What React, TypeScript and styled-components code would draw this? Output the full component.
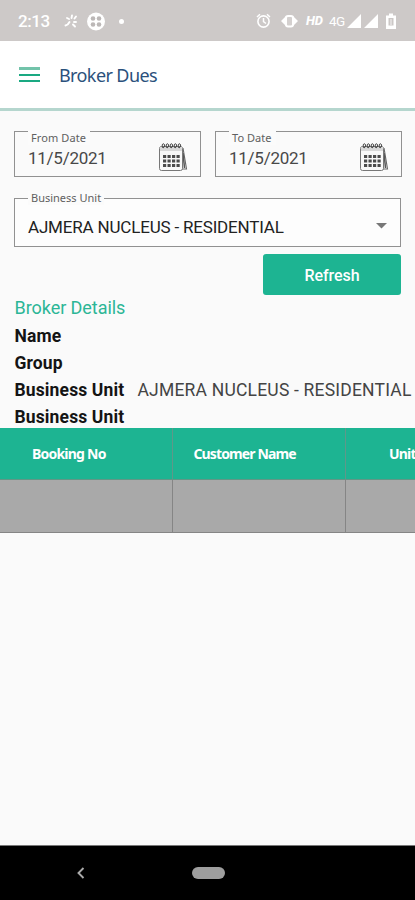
import React from "react";
import styled, { createGlobalStyle } from "styled-components";

const GlobalStyle = createGlobalStyle`
  * { box-sizing: border-box; }
  body { margin: 0; background: #fafafa; font-family: Roboto, sans-serif; overflow: hidden; }
`;

const Screen = styled.div`
  width: 415px;
  height: 900px;
  display: flex;
  flex-direction: column;
  background: #fafafa;
  overflow: hidden;
`;

const StatusBar = styled.div`
  height: 41px;
  flex: none;
  display: flex;
  align-items: center;
  background: #cdc9c8;
  color: #fff;
  padding: 0 17px 0 18px;
`;

const Clock = styled.span`
  width: 46px;
  font-size: 17px;
  line-height: 20px;
  font-weight: 500;
  letter-spacing: -0.4px;
  padding-top: 1px;
`;

const StatusIcons = styled.svg`
  display: block;
  flex: none;
`;

const StatusGroup = styled.div`
  margin-left: auto;
  display: flex;
  align-items: center;
`;

const StatusText = styled.span<{ $bold?: boolean; $width: number }>`
  width: ${(p) => p.$width}px;
  font-size: ${(p) => (p.$bold ? 13 : 13.5)}px;
  line-height: 16px;
  font-weight: ${(p) => (p.$bold ? 800 : 400)};
  font-style: ${(p) => (p.$bold ? "italic" : "normal")};
  letter-spacing: ${(p) => (p.$bold ? -0.2 : -0.7)}px;
  white-space: nowrap;
`;

const Header = styled.header`
  height: 70px;
  flex: none;
  display: flex;
  align-items: center;
  gap: 19px;
  padding: 0 0 0 19px;
  background: #fff;
  border-bottom: 3px solid #b5d6ce;
`;

const Burger = styled.div`
  width: 21px;
  height: 15px;
  display: flex;
  flex-direction: column;
  justify-content: space-between;
`;

const BurgerLine = styled.span<{ $soft?: boolean }>`
  height: ${(p) => (p.$soft ? 3 : 2)}px;
  background: ${(p) => (p.$soft ? "#72c3aa" : "#1aa982")};
`;

const Title = styled.h1`
  margin: 0;
  font: 400 18px/24px "Noto Sans", sans-serif;
  letter-spacing: -0.6px;
  color: #2b517c;
`;

const Form = styled.section`
  display: flex;
  flex-direction: column;
  padding: 20px 14px 0;
`;

const DateRow = styled.div`
  display: grid;
  grid-template-columns: 187px 187px;
  gap: 14px;
`;

const Field = styled.div<{ $height: number; $white?: boolean }>`
  position: relative;
  height: ${(p) => p.$height}px;
  display: flex;
  justify-content: space-between;
  border: 1px solid #919191;
  background: ${(p) => (p.$white ? "#fdfdfd" : "transparent")};
`;

const FieldLabel = styled.label<{ $width: number; $top: number; $spacing: number }>`
  position: absolute;
  left: 13px;
  top: ${(p) => p.$top}px;
  width: ${(p) => p.$width}px;
  padding-left: 3px;
  font: 400 11px/14px "Noto Sans", sans-serif;
  letter-spacing: ${(p) => p.$spacing}px;
  white-space: nowrap;
  color: #606060;
  background: #fbfbfb;
`;

const FieldValue = styled.span<{ $top: number; $spacing: number; $dark?: boolean }>`
  padding: ${(p) => p.$top}px 0 0 13px;
  font-size: 17px;
  line-height: 20px;
  letter-spacing: ${(p) => p.$spacing}px;
  white-space: nowrap;
  color: ${(p) => (p.$dark ? "#222" : "#484848")};
`;

const CalendarSvg = styled.svg`
  margin: 10px 12px 0 0;
  flex: none;
`;

const UnitSlot = styled.div`
  margin-top: 21px;
`;

const Caret = styled.svg`
  margin: 24px 13px 0 0;
  flex: none;
`;

const RefreshButton = styled.button`
  align-self: flex-end;
  width: 138px;
  height: 41px;
  margin-top: 7px;
  padding: 2px 0 0;
  border: 0;
  border-radius: 3px;
  background: #1db492;
  color: #fff;
  font: 500 16px/20px Roboto, sans-serif;
  letter-spacing: -0.05px;
`;

const Details = styled.section`
  height: 133px;
  flex: none;
  padding-left: 14.5px;
`;

const DetailsTitle = styled.h2`
  margin: 0 0 3px;
  font-size: 18px;
  line-height: 25px;
  font-weight: 400;
  letter-spacing: -0.05px;
  color: #2cb696;
`;

const DetailRow = styled.div`
  height: 27px;
  display: grid;
  grid-template-columns: 123px max-content;
  line-height: 27px;
  white-space: nowrap;
`;

const DetailName = styled.span`
  font-size: 17.5px;
  font-weight: 700;
  letter-spacing: 0.13px;
  color: #141414;
`;

const DetailValue = styled.span`
  font-size: 17.5px;
  font-weight: 400;
  letter-spacing: 0.2px;
  color: #444;
`;

const Table = styled.div`
  display: grid;
  grid-template-columns: 173px 173px 173px;
  grid-template-rows: 52px 53px;
  flex: none;
  width: 519px;
`;

const HeadCell = styled.div<{ $indent: number; $spacing: number }>`
  padding: 0 0 0 ${(p) => p.$indent}px;
  display: flex;
  align-items: center;
  border-right: 1px solid #5f9889;
  border-bottom: 1px solid #629686;
  background: #1db492;
  color: #fff;
  font: 700 14px/20px "Noto Sans", sans-serif;
  letter-spacing: ${(p) => p.$spacing}px;
  white-space: nowrap;
`;

const BodyCell = styled.div`
  border-right: 1px solid #858585;
  border-bottom: 1px solid #858585;
  background: #a9a9a9;
`;

const NavBar = styled.nav`
  height: 55px;
  flex: none;
  margin-top: auto;
  display: flex;
  align-items: center;
  padding: 0 0 1px 76px;
  background: #000;
  border-top: 1px solid #777;
`;

const HomePill = styled.span`
  width: 33px;
  height: 12px;
  margin-left: 106px;
  border-radius: 6px;
  background: #9e9e9e;
`;

function Calendar() {
  return (
    <CalendarSvg width="30" height="31" viewBox="0 0 30 31" fill="none">
      <path d="M25 6L28.5 27H24" stroke="#666" strokeWidth="1.1" />
      <path d="M25 11L26.5 26" stroke="#555" strokeWidth="1.5" />
      <rect x="1.5" y="4.5" width="23" height="24" rx="2" fill="#f8f8f8" stroke="#777" />
      <path d="M2 5H24V9H2Z" fill="#d8d8d8" />
      {[5, 9, 13, 17, 21].map((x) => (
        <path key={x} d={`M${x} 6C${x - 2} 3 ${x} 1 ${x + 1} 2S${x + 2} 5 ${x} 6`} stroke="#444" />
      ))}
      {[13, 17.5, 22].map((y) =>
        [5, 9.5, 14, 18.5].map((x) => (
          <rect key={`${x}-${y}`} x={x} y={y} width="3.2" height="3" fill="#4b4b4b" />
        ))
      )}
    </CalendarSvg>
  );
}

function DateField({ label, notch, spacing }: { label: string; notch: number; spacing: number }) {
  return (
    <Field $height={46}>
      <FieldLabel $width={notch} $top={-1} $spacing={spacing}>{label}</FieldLabel>
      <FieldValue $top={16} $spacing={-0.25}>11/5/2021</FieldValue>
      <Calendar />
    </Field>
  );
}

const rows = [
  { name: "Name", value: "" },
  { name: "Group", value: "" },
  { name: "Business Unit", value: "AJMERA NUCLEUS - RESIDENTIAL" },
  { name: "Business Unit", value: "" },
];

const columns = [
  { text: "Booking No", indent: 32, spacing: -0.78 },
  { text: "Customer Name", indent: 20.5, spacing: -0.87 },
  { text: "Unit", indent: 43, spacing: -0.8 },
];

export default function App() {
  return (
    <>
      <GlobalStyle />
      <Screen>
        <StatusBar>
          <Clock>2:13</Clock>
          <StatusIcons width="64" height="20" viewBox="0 0 64 20" fill="none">
            <g stroke="#fff" strokeWidth="1.9" strokeLinecap="round">
              <path d="M3 7L5 8M1.5 14.5Q4 14 5.5 11M8 4.5L7.5 7M12 5.5L10.5 7.5M10 11H12M9 13.5L11 15.5" />
            </g>
            <circle cx="32" cy="10.5" r="9" fill="#fff" />
            <g fill="#bcb8b7">
              <circle cx="29" cy="7.5" r="2.3" /><circle cx="35" cy="7.5" r="2.3" />
              <circle cx="29" cy="13.5" r="2.3" /><circle cx="35" cy="13.5" r="2.3" />
            </g>
            <circle cx="57.5" cy="10.5" r="2.5" fill="#fff" />
          </StatusIcons>
          <StatusGroup>
            <StatusIcons width="50" height="18" viewBox="0 0 50 18" fill="none">
              <circle cx="7.5" cy="9.5" r="5.6" stroke="#fff" strokeWidth="1.6" />
              <path d="M7.5 6V9.7L10 11.5M1 5L4 2.3M11 2.3L14 5" stroke="#fff" strokeWidth="1.5" />
              <path d="M25 9L30 4V14ZM42 9L37 4V14Z" fill="#fff" />
              <rect x="30" y="4" width="7" height="10.5" rx="2" fill="#d4d0cf" stroke="#fff" strokeWidth="2" />
            </StatusIcons>
            <StatusText $bold $width={23}>HD</StatusText>
            <StatusText $width={18}>4G</StatusText>
            <StatusIcons width="51" height="18" viewBox="0 0 51 18" fill="none">
              <path d="M0 16L14 2V16ZM17 16L31 2V16Z" fill="#fff" />
              <path d="M42 1.5H46V3.5H49V17H39V3.5H42Z" fill="#fff" />
              <rect x="41.5" y="6" width="5" height="7.5" fill="#cbc7c6" />
              <path d="M43 8H45M43 10H45M43 12H45" stroke="#f5f3f3" />
            </StatusIcons>
          </StatusGroup>
        </StatusBar>
        <Header>
          <Burger><BurgerLine $soft /><BurgerLine /><BurgerLine /></Burger>
          <Title>Broker Dues</Title>
        </Header>
        <Form>
          <DateRow>
            <DateField label="From Date" notch={62} spacing={0.1} />
            <DateField label="To Date" notch={47} spacing={0.05} />
          </DateRow>
          <UnitSlot>
            <Field $height={49} $white>
              <FieldLabel $width={76} $top={-8} $spacing={0}>Business Unit</FieldLabel>
              <FieldValue $top={18} $spacing={-0.18} $dark>AJMERA NUCLEUS - RESIDENTIAL</FieldValue>
              <Caret width="11" height="6"><path d="M0 0H11L5.5 5.5Z" fill="#777" /></Caret>
            </Field>
          </UnitSlot>
          <RefreshButton>Refresh</RefreshButton>
        </Form>
        <Details>
          <DetailsTitle>Broker Details</DetailsTitle>
          {rows.map((row, i) => (
            <DetailRow key={i}>
              <DetailName>{row.name}</DetailName>
              <DetailValue>{row.value}</DetailValue>
            </DetailRow>
          ))}
        </Details>
        <Table>
          {columns.map((c) => (
            <HeadCell key={c.text} $indent={c.indent} $spacing={c.spacing}>{c.text}</HeadCell>
          ))}
          {columns.map((c) => <BodyCell key={c.text} />)}
        </Table>
        <NavBar>
          <svg width="10" height="14" viewBox="0 0 10 14" fill="none">
            <path d="M7.5 2L2.5 7L7.5 12" stroke="#aaa" strokeWidth="1.9" />
          </svg>
          <HomePill />
        </NavBar>
      </Screen>
    </>
  );
}
